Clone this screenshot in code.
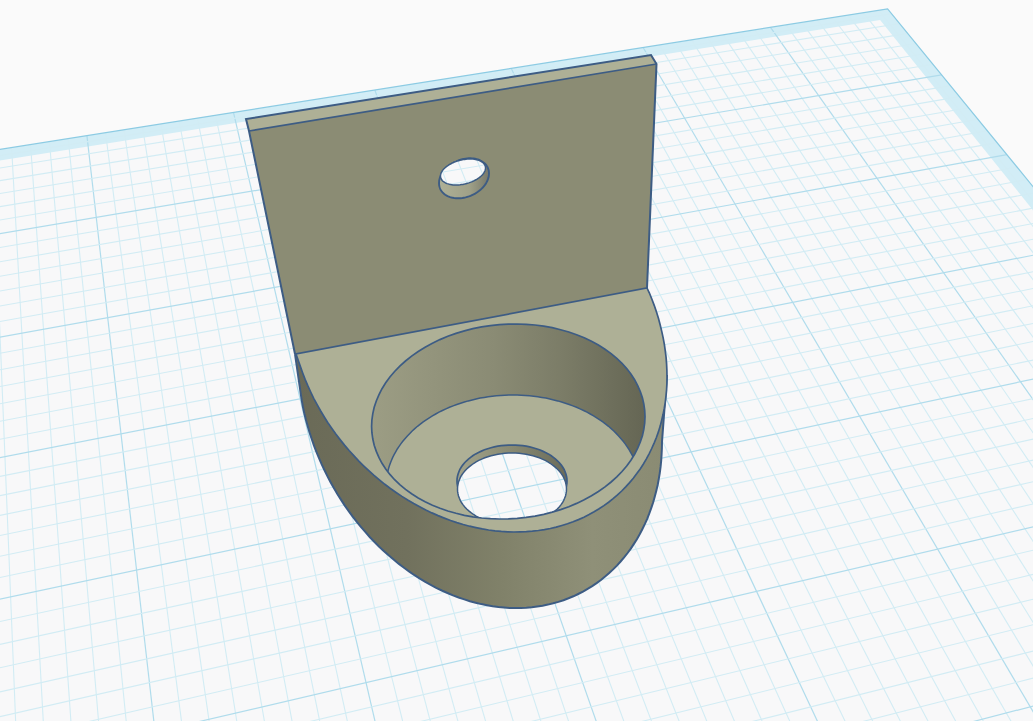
type Pt = [number, number];

// projective map of the workplane, one unit = one major grid square
const project = (i: number, j: number): Pt => {
  const a = i * 0.0193;
  const b = j * -0.0677;
  const w = 1 + a + b;
  return [(735 + 8233 * a - 60 * b) / w, (204 - 1155 * a - 1150 * b) / w];
};

const poly = (pts: Pt[]) => pts.map((p) => `${p[0].toFixed(1)},${p[1].toFixed(1)}`).join(' ');

// ellipse as x = cx + X cos t, y = cy + Y sin(t + phi), s = sin(phi)
const arc = (cx: number, cy: number, X: number, Y: number, s: number, from = 0, to = 360): Pt[] => {
  const pts: Pt[] = [];
  const c = Math.sqrt(1 - s * s);
  for (let k = 0; k <= 96; k++) {
    const t = ((from + ((to - from) * k) / 96) * Math.PI) / 180;
    pts.push([cx + X * Math.cos(t), cy + Y * (Math.sin(t) * c + Math.cos(t) * s)]);
  }
  return pts;
};

const MIN_I = -6;
const MAX_I = 1.95;
const MIN_J = -1.93;
const MAX_J = 5;
const J_CELLS = 7;

const gridLines = () => {
  const lines: { a: Pt; b: Pt; major: boolean }[] = [];
  for (let n = MIN_I * 8; n / 8 <= MAX_I; n++) {
    lines.push({ a: project(n / 8, MIN_J), b: project(n / 8, MAX_J), major: n % 8 === 0 });
  }
  for (let n = -2 * J_CELLS + 1; n / J_CELLS <= MAX_J; n++) {
    lines.push({ a: project(MIN_I, n / J_CELLS), b: project(MAX_I, n / J_CELLS), major: n % J_CELLS === 0 });
  }
  return lines;
};

const outer: Pt[] = [project(MIN_I, MIN_J), project(MAX_I, MIN_J), project(MAX_I, MAX_J), project(MIN_I, MAX_J)];
const inner: Pt[] = [project(MIN_I, -1.8), project(1.83, -1.8), project(1.83, MAX_J), project(MIN_I, MAX_J)];

const topArc: Pt[] = [[647, 288], ...arc(478, 338, 189, 194, 0.2, -25, 160), [296, 354]];
const sideArc = arc(480, 400, 182, 208, 0.2, 0, 172);
const boreRing = arc(508.3, 421.5, 136.7, 97.5, -0.05);
const floorArc = arc(513, 487, 127, 92, 0, 180, 360);
const holeTop = arc(512, 481, 55, 36, 0);
const holeWhite = arc(512, 489, 54.5, 36, 0);
const wallHoleOuter = arc(464, 178.3, 25, 20, -0.24);
const wallHoleWhite = arc(463, 172, 22.5, 13, -0.31);

const INK = '#3d5c84';

export default function App() {
  return (
    <div className="h-[721px] w-[1033px] overflow-hidden bg-[#fafafa]">
      <svg viewBox="0 0 1033 721" className="block h-full w-full">
        <defs>
          <linearGradient id="side" gradientUnits="userSpaceOnUse" x1="295" y1="0" x2="667" y2="0">
            <stop offset="0" stopColor="#6a6a57" />
            <stop offset="0.3" stopColor="#71715d" />
            <stop offset="0.55" stopColor="#808169" />
            <stop offset="0.8" stopColor="#8f9078" />
            <stop offset="1" stopColor="#8a8b73" />
          </linearGradient>
          <linearGradient id="boreWall" gradientUnits="userSpaceOnUse" x1="372" y1="0" x2="645" y2="0">
            <stop offset="0" stopColor="#9c9d84" />
            <stop offset="0.45" stopColor="#8a8b74" />
            <stop offset="0.7" stopColor="#7b7c67" />
            <stop offset="1" stopColor="#656654" />
          </linearGradient>
          <linearGradient id="holeWall" gradientUnits="userSpaceOnUse" x1="457" y1="0" x2="567" y2="0">
            <stop offset="0" stopColor="#a3a48b" />
            <stop offset="0.5" stopColor="#888972" />
            <stop offset="1" stopColor="#6a6b59" />
          </linearGradient>
          <linearGradient id="wallHoleWall" gradientUnits="userSpaceOnUse" x1="440" y1="0" x2="489" y2="0">
            <stop offset="0" stopColor="#aeb096" />
            <stop offset="0.6" stopColor="#a0a188" />
            <stop offset="1" stopColor="#77786a" />
          </linearGradient>
          <clipPath id="boreClip">
            <polygon points={poly(boreRing)} />
          </clipPath>
          <clipPath id="holeClip">
            <polygon points={poly(holeWhite)} />
          </clipPath>
          <clipPath id="wallHoleClip">
            <polygon points={poly(wallHoleWhite)} />
          </clipPath>
          <g id="workplane">
            <polygon points={poly(outer)} fill="#d2edf6" />
            <polygon points={poly(inner)} fill="#f8f8f9" />
            {gridLines().map((l, k) => (
              <line
                key={k}
                x1={l.a[0]}
                y1={l.a[1]}
                x2={l.b[0]}
                y2={l.b[1]}
                stroke={l.major ? '#b0dcec' : '#d2ecf4'}
                strokeWidth={l.major ? 1.2 : 1.1}
              />
            ))}
            <polyline points={poly([outer[0], outer[1], outer[2]])} fill="none" stroke="#8ccbe3" strokeWidth="1.2" />
          </g>
        </defs>

        <use href="#workplane" />

        {/* back wall */}
        <polygon points="246,119 651,55 656.5,64 249,131" fill="#aeb096" />
        <polygon points="249,131 656.5,64 647,288 295,354" fill="#8b8c74" />
        <polygon points={poly(wallHoleOuter)} fill="url(#wallHoleWall)" stroke={INK} strokeWidth="1.9" />
        <use href="#workplane" clipPath="url(#wallHoleClip)" />
        <polygon points={poly(wallHoleWhite)} fill="none" stroke={INK} strokeWidth="1.5" />
        <path d="M295,354 L249,131 L246,119 L651,55 L656.5,64 L647,288" fill="none" stroke={INK} strokeWidth="2" />
        <path d="M249,131 L656.5,64" fill="none" stroke={INK} strokeWidth="1.6" />

        {/* rounded base */}
        <polygon points={poly([[667, 375], ...sideArc, [295, 354]])} fill="url(#side)" />
        <polyline points={poly([[667, 375], ...sideArc, [295, 354]])} fill="none" stroke={INK} strokeWidth="2" />
        <polygon points={poly(topArc)} fill="#aeb096" stroke={INK} strokeWidth="1.7" />

        {/* counterbore */}
        <polygon points={poly(boreRing)} fill="url(#boreWall)" />
        <g clipPath="url(#boreClip)">
          <polygon points={poly([...floorArc, [660, 560], [360, 560]])} fill="#aeb096" />
          <polyline points={poly(floorArc)} fill="none" stroke={INK} strokeWidth="1.5" />
          <polygon points={poly(holeTop)} fill="url(#holeWall)" stroke={INK} strokeWidth="1.7" />
          <use href="#workplane" clipPath="url(#holeClip)" />
          <polygon points={poly(holeWhite)} fill="none" stroke={INK} strokeWidth="1.5" />
        </g>
        <polygon points={poly(boreRing)} fill="none" stroke={INK} strokeWidth="1.7" />
      </svg>
    </div>
  );
}
